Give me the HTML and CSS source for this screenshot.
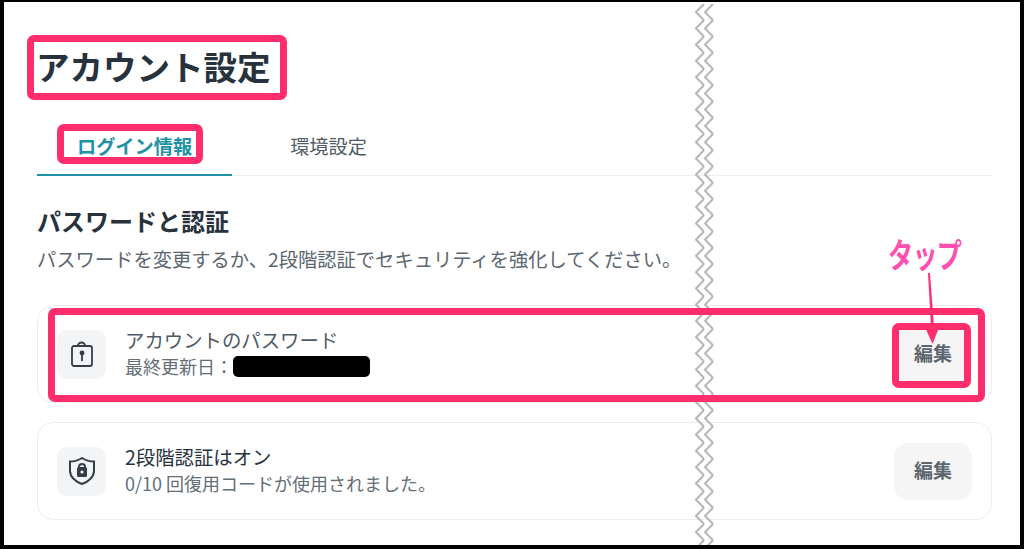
FILE: index.html
```html
<!DOCTYPE html>
<html lang="ja">
<head>
    <meta charset="UTF-8">
    <meta name="viewport" content="width=device-width, initial-scale=1.0">
    <title>アカウント設定</title>
    <link rel="stylesheet" href="styles.css">
</head>
<body>
    <div class="frame">
        <h1>アカウント設定</h1>

        <div class="tabs">
            <div class="tab active">ログイン情報</div>
            <div class="tab">環境設定</div>
        </div>

        <h2>パスワードと認証</h2>
        <p class="lead">パスワードを変更するか、2段階認証でセキュリティを強化してください。</p>

        <div class="card">
            <div class="card-icon">
                <svg width="26" height="26" viewBox="0 0 26 26" fill="none" stroke="#333e4a" stroke-width="1.800">
                    <path d="M9 5V4.500a3.500 3 0 0 1 7 0V5"/>
                    <rect x="3" y="5" width="20" height="20" rx="2"/>
                    <circle cx="13" cy="12" r="2.400" fill="#333e4a" stroke="none"/>
                    <path d="M13 13v7"/>
                </svg>
            </div>
            <div class="card-text">
                <div class="card-title">アカウントのパスワード</div>
                <div class="card-sub">最終更新日：<span class="masked"></span></div>
            </div>
            <button>編集</button>
        </div>

        <div class="card">
            <div class="card-icon">
                <svg width="26" height="28" viewBox="0 0 26 28" fill="none" stroke="#333e4a" stroke-width="2">
                    <path d="M13 1C16 3 21 4.500 25 4.500V14C25 20 19 25 13 27C7 25 1 20 1 14V4.500C5 4.500 10 3 13 1Z"/>
                    <path d="M10 10.500V10a3 3 0 0 1 6 0v.500"/>
                    <rect x="8" y="10" width="10" height="10" rx="1.500" fill="#333e4a" stroke="none"/>
                    <circle cx="13" cy="15" r="1.600" fill="#f3f4f6" stroke="none"/>
                </svg>
            </div>
            <div class="card-text">
                <div class="card-title dark">2段階認証はオン</div>
                <div class="card-sub">0/10 回復用コードが使用されました。</div>
            </div>
            <button>編集</button>
        </div>

        <!-- 省略線 -->
        <svg class="zigzag" width="20" height="546" viewBox="0 0 20 546">
            <defs>
                <pattern id="zig" width="20" height="16.250" patternUnits="userSpaceOnUse">
                    <path d="M9 0L1 8.125L9 16.250M18 0L10 8.125L18 16.250" fill="none" stroke="#b4b4b4" stroke-width="2"/>
                </pattern>
            </defs>
            <rect width="20" height="546" fill="url(#zig)"/>
        </svg>

        <!-- 注釈 -->
        <div class="mark mark-title"></div>
        <div class="mark mark-tab"></div>
        <div class="mark mark-row"></div>
        <div class="mark mark-btn"></div>
        <div class="tap">タップ</div>
        <svg class="arrow" width="24" height="72" viewBox="0 0 24 72">
            <path d="M7 0L9 0L13 54L19 52L11.500 71L4 54L10 54Z" fill="#ff2d6b"/>
        </svg>
    </div>
</body>
</html>
```

FILE: styles.css
```css
* {
    margin: 0;
    padding: 0;
    box-sizing: border-box;
}

body {
    font-family: "Noto Sans CJK JP", "Noto Sans", sans-serif;
    background: white;
    color: #2b3640;
}

.frame {
    position: relative;
    width: 1024px;
    height: 549px;
    overflow: hidden;
    border: solid black;
    border-width: 2px 4px 4px 4px;
    padding: 42px 28px 0 33px;
    background: white;
}

h1 {
    font-size: 33.500px;
    line-height: 44px;
    font-weight: 700;
    color: #27323d;
    margin-left: -1px;
    margin-bottom: 30px;
}

.tabs {
    display: flex;
    gap: 18px;
    height: 58px;
    border-bottom: 1px solid #eeeeee;
    margin-bottom: 29px;
}

.tab {
    padding: 0 40px;
    font-size: 19.200px;
    line-height: 56px;
    height: 58px;
    color: #4f5a64;
}

.tab.active {
    color: #1f93a6;
    font-weight: 700;
    border-bottom: 2px solid #1f93a6;
}

h2 {
    font-size: 24px;
    line-height: 32px;
    font-weight: 700;
    color: #27323d;
    margin-bottom: 8px;
}

.lead {
    font-size: 19.300px;
    line-height: 28px;
    color: #5c666f;
    margin-bottom: 32px;
}

.card {
    display: flex;
    align-items: center;
    height: 98px;
    margin-bottom: 19px;
    padding: 0 19px;
    border: 1px solid #eeeeee;
    border-radius: 16px;
}

.card-icon {
    width: 49px;
    height: 49px;
    border-radius: 10px;
    background: #f3f4f6;
    display: flex;
    align-items: center;
    justify-content: center;
    margin-right: 19px;
}

.card-text {
    flex: 1;
}

.card-title {
    font-size: 19.400px;
    line-height: 26px;
    margin-top: -2px;
    color: #4f5a64;
}

.card-title.dark {
    color: #27323d;
}

.card-sub {
    display: flex;
    align-items: center;
    font-size: 18px;
    line-height: 27px;
    color: #646e77;
}

.masked {
    width: 137px;
    height: 21px;
    background: black;
    border-radius: 5px;
}

button {
    width: 78px;
    height: 57px;
    padding-bottom: 3px;
    background: #f5f5f5;
    border: none;
    border-radius: 14px;
    font-family: inherit;
    font-size: 19px;
    font-weight: 700;
    color: #5c666f;
}

.mark {
    position: absolute;
    border: 7px solid #ff2d6b;
    border-radius: 7px;
}

.mark-title {
    left: 23px;
    top: 33px;
    width: 260px;
    height: 65px;
}

.mark-tab {
    left: 53px;
    top: 122px;
    width: 146px;
    height: 40px;
}

.mark-row {
    left: 44px;
    top: 306px;
    width: 937px;
    height: 94px;
}

.mark-btn {
    left: 888px;
    top: 321px;
    width: 79px;
    height: 65px;
}

.tap {
    position: absolute;
    left: 884px;
    top: 230px;
    font-size: 34px;
    line-height: 44px;
    letter-spacing: -1px;
    font-weight: 700;
    color: #ff4fae;
    transform: scaleX(0.74);
    transform-origin: left;
}

.arrow {
    position: absolute;
    left: 917px;
    top: 271px;
}

.zigzag {
    position: absolute;
    left: 691px;
    top: 2px;
}
```
